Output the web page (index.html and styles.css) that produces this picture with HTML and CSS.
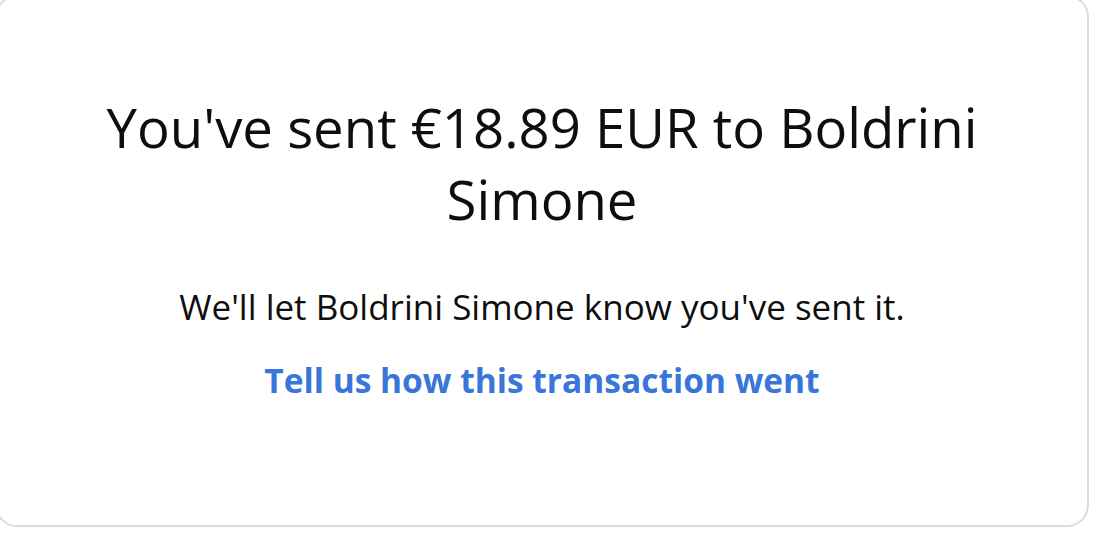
FILE: index.html
```html
<!DOCTYPE html>
<html>
<head>
<meta charset="utf-8">
<link rel="stylesheet" href="styles.css">
</head>
<body>
<div class="card">
  <h1 class="title">You've sent €18.89 EUR to Boldrini Simone</h1>
  <p class="note">We'll let Boldrini Simone know you've sent it.</p>
  <a class="link" href="#">Tell us how this transaction went</a>
</div>
</body>
</html>
```
FILE: styles.css
```css
html, body {
  margin: 0;
  padding: 0;
  background: #ffffff;
  overflow: hidden;
}
body {
  font-family: "Open Sans", "Noto Sans", sans-serif;
  color: #0e0e0e;
}
.card {
  box-sizing: border-box;
  width: 1094px;
  height: 532px;
  margin: -5px 0 0 -5px;
  border: 2px solid #dcdcdc;
  border-radius: 22px;
  display: flex;
  flex-direction: column;
  align-items: center;
  padding: 93.8px 60px 0;
}
.title {
  margin: 0;
  font-size: 54.5px;
  font-weight: 400;
  line-height: 72px;
  text-align: center;
  width: 920px;
}
.note {
  margin: 52.6px 0 0;
  font-size: 35px;
  line-height: 40px;
}
.link {
  margin-top: 32.6px;
  font-size: 33.5px;
  line-height: 40px;
  font-weight: 700;
  color: #3876dc;
  text-decoration: none;
}
```
